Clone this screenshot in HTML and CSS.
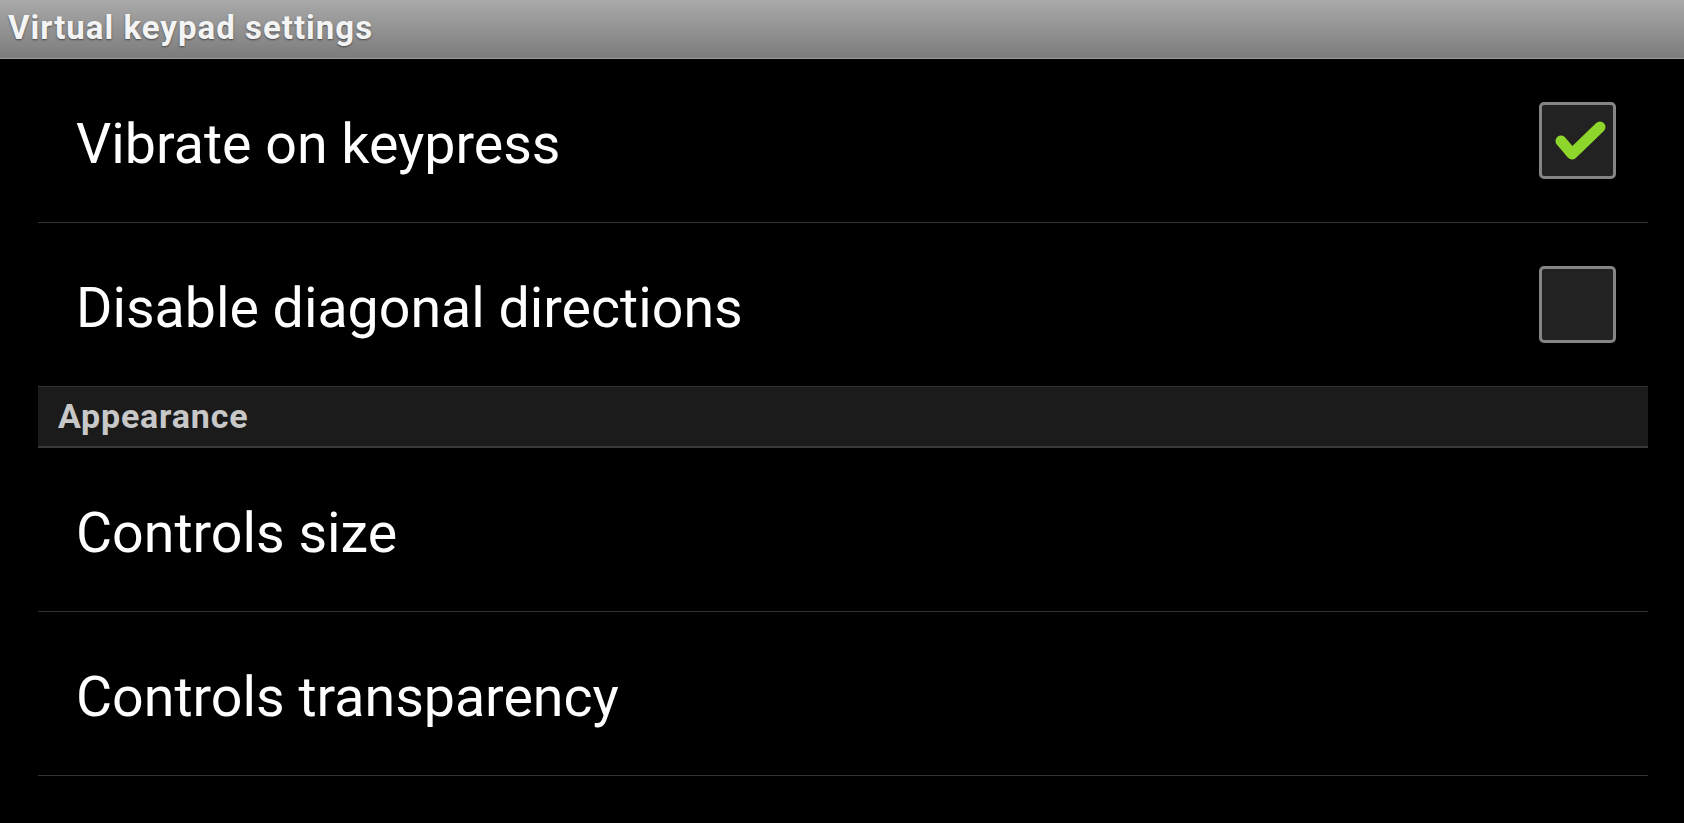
FILE: index.html
```html
<!DOCTYPE html>
<html lang="en">
<head>
  <meta charset="UTF-8">
  <title>Virtual keypad settings</title>
  <link rel="stylesheet" href="styles.css">
</head>
<body>
  <div class="titlebar">Virtual keypad settings</div>

  <div class="prefs">
    <div class="pref">
      <span class="pref-title">Vibrate on keypress</span>
      <span class="checkbox checked">
        <svg viewBox="0 0 77 77" width="77" height="77"><path d="M22 39 L33 52 L61 25" fill="none" stroke="#8ed62c" stroke-width="11" stroke-linecap="round" stroke-linejoin="round"/></svg>
      </span>
    </div>
    <div class="pref">
      <span class="pref-title">Disable diagonal directions</span>
      <span class="checkbox"></span>
    </div>

    <div class="category">Appearance</div>

    <div class="pref">
      <span class="pref-title">Controls size</span>
    </div>
    <div class="pref">
      <span class="pref-title">Controls transparency</span>
    </div>
  </div>
</body>
</html>
```

FILE: styles.css
```css
body {
  margin: 0;
  background: #000;
  font-family: Roboto, "Liberation Sans", sans-serif;
  color: #fff;
  overflow: hidden;
}
.titlebar {
  height: 59px;
  box-sizing: border-box;
  padding-left: 8px;
  background: linear-gradient(#a9a9a9, #7c7c7c);
  border-bottom: 1px solid #9a9a9a;
  font-size: 33px;
  font-weight: bold;
  letter-spacing: 1px;
  line-height: 56px;
  color: #f4f4f4;
  text-shadow: 0 1px 2px rgba(0, 0, 0, 0.5);
}
.prefs {
  margin: 0 36px 0 38px;
}
.pref {
  height: 163px;
  display: flex;
  align-items: center;
  justify-content: space-between;
  border-bottom: 1px solid #333;
  padding: 0 32px 0 38px;
}
.pref-title {
  font-size: 55.5px;
  padding-top: 7px;
  color: #fff;
}
.checkbox {
  width: 77px;
  height: 77px;
  box-sizing: border-box;
  border: 3px solid #858585;
  border-radius: 5px;
  background: #222;
  position: relative;
}
.checkbox svg {
  position: absolute;
  left: -3px;
  top: -3px;
}
.category {
  height: 61px;
  box-sizing: border-box;
  background: #1b1b1b;
  border-bottom: 2px solid #3a3a3a;
  padding-left: 20px;
  font-size: 34px;
  font-weight: bold;
  letter-spacing: 0.8px;
  line-height: 59px;
  color: #c8c8c8;
}
```
